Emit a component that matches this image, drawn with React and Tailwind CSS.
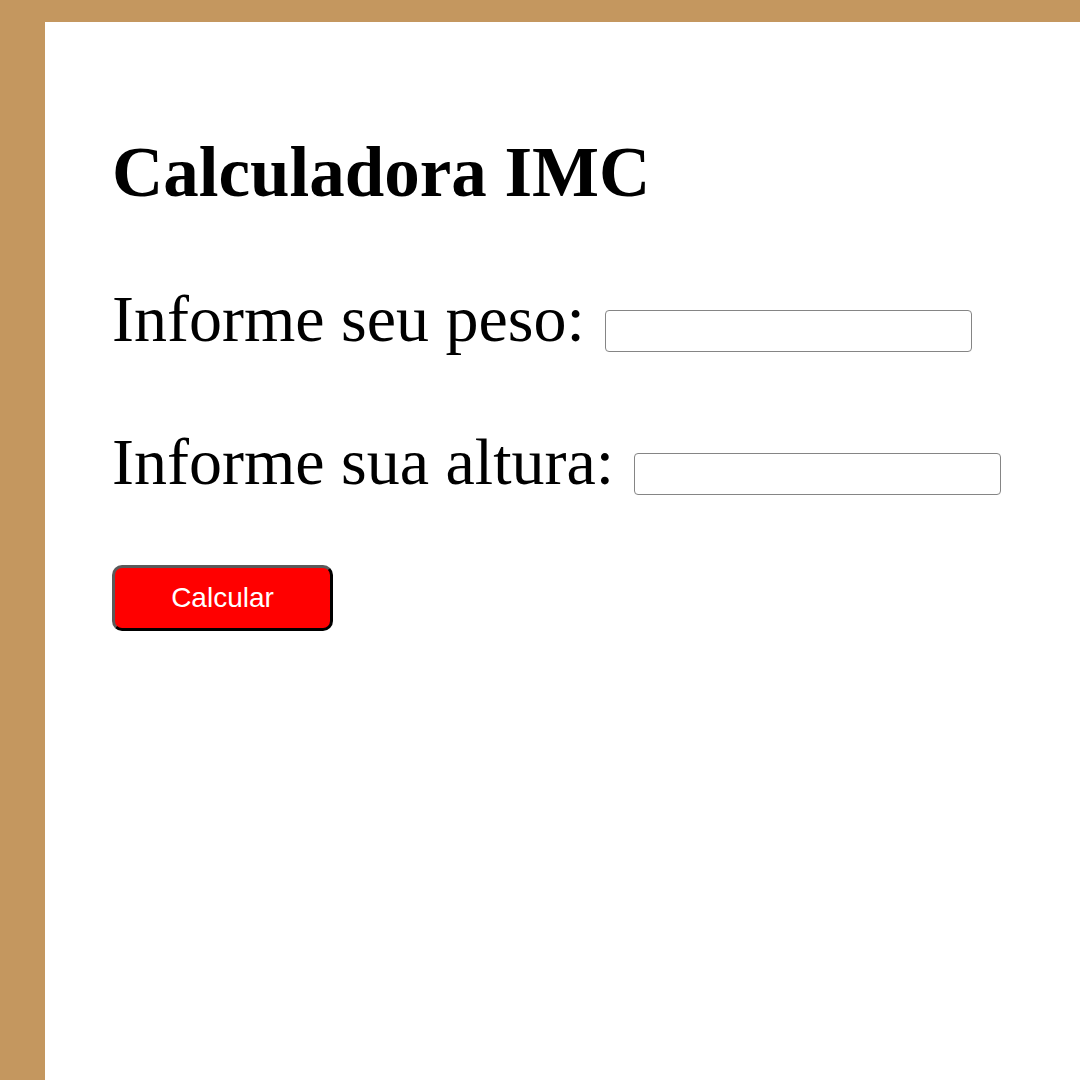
import React, { useState } from 'react';

const Campo = ({ label, value, onChange }) => (
  <label className="flex items-start gap-[20px]">
    <span className="text-[66px] leading-none text-black whitespace-nowrap">{label}</span>
    <input
      type="text"
      value={value}
      onChange={(e) => onChange(e.target.value)}
      className="mt-[24px] w-[367px] h-[42px] border border-[#858585] rounded-[4px] bg-white px-2 text-[20px] outline-none"
    />
  </label>
);

const App = () => {
  const [peso, setPeso] = useState('');
  const [altura, setAltura] = useState('');

  return (
    <div className="min-h-screen bg-[#c4975f] pl-[45px] pt-[22px] font-['Liberation_Serif',serif]">
      <div className="min-h-[1058px] bg-white pl-[67px] pt-[115px]">
        <h1 className="text-[71px] leading-none font-bold text-black">Calculadora IMC</h1>

        <div className="mt-[78px] flex flex-col gap-[77px]">
          <Campo label="Informe seu peso:" value={peso} onChange={setPeso} />
          <Campo label="Informe sua altura:" value={altura} onChange={setAltura} />
        </div>

        <button
          type="button"
          className="mt-[70px] w-[221px] h-[66px] rounded-[10px] bg-[#ff0000] border-[3px] border-t-[#5a5a5a] border-l-[#5a5a5a] border-r-black border-b-black text-white text-[28px] font-['Liberation_Sans',sans-serif]"
        >
          Calcular
        </button>
      </div>
    </div>
  );
};

export default App;
